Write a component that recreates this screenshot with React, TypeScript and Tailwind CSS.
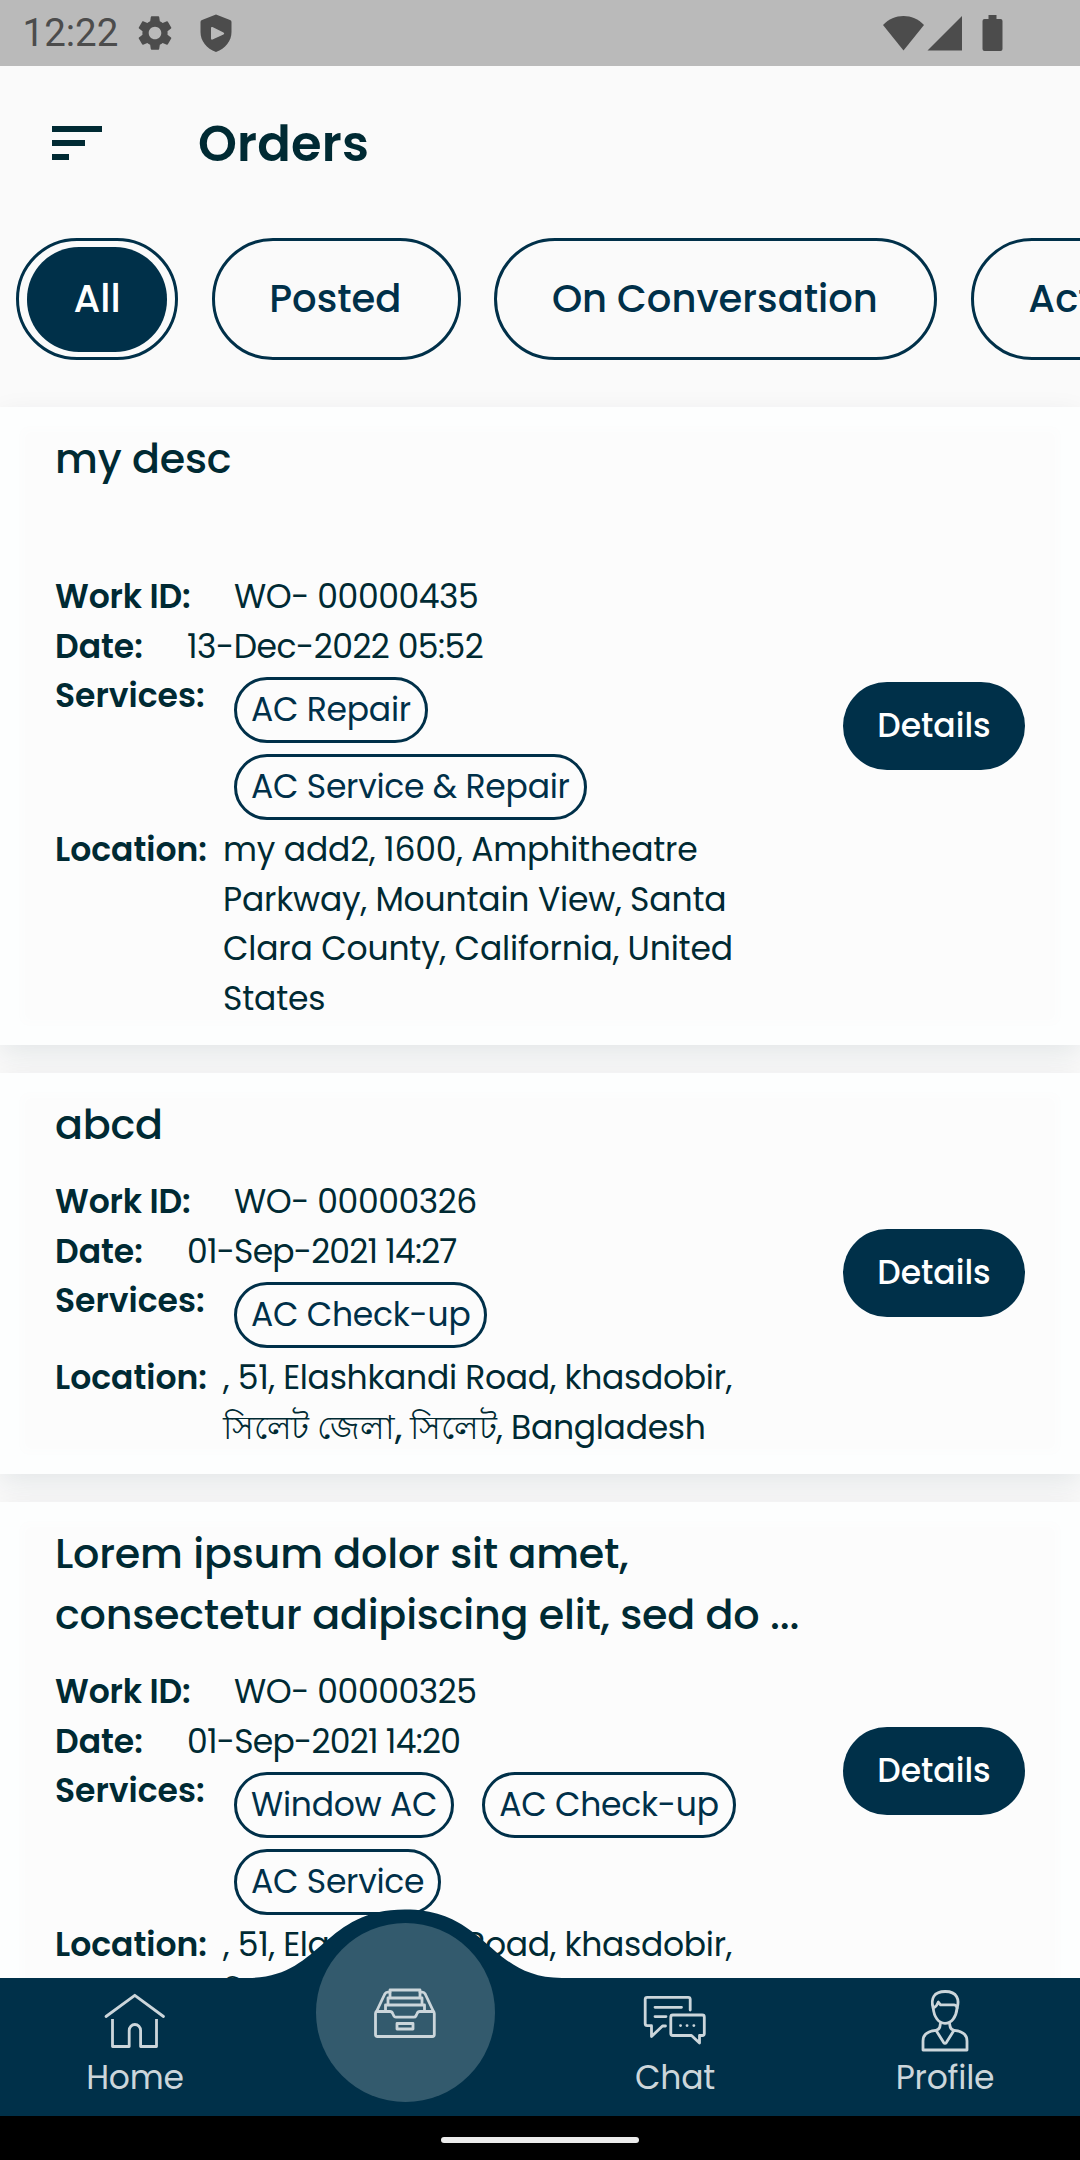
import type { ReactNode } from "react";
import { MdSettings } from "react-icons/md";

type Order = {
  title: string[];
  workId: string;
  date: string;
  dateSpacing: string;
  services: string[];
  location: ReactNode[];
  locationSpacing: string;
};

const tabs = ["All", "Posted", "On Conversation", "Active"];

const sylhet: ReactNode[] = [
  ", 51, Elashkandi Road, khasdobir,",
  <>
    <span className="font-medium">সিলেট জেলা, সিলেট</span>, Bangladesh
  </>,
];

const orders: Order[] = [
  {
    title: ["my desc", "\u00a0"],
    workId: "WO- 00000435",
    date: "13-Dec-2022 05:52",
    dateSpacing: "tracking-[-0.5px]",
    services: ["AC Repair", "AC Service & Repair"],
    location: ["my add2, 1600, Amphitheatre", "Parkway, Mountain View, Santa", "Clara County, California, United", "States"],
    locationSpacing: "tracking-[-0.18px]",
  },
  {
    title: ["abcd"],
    workId: "WO- 00000326",
    date: "01-Sep-2021 14:27",
    dateSpacing: "tracking-[-0.8px]",
    services: ["AC Check-up"],
    location: sylhet,
    locationSpacing: "tracking-[-0.3px]",
  },
  {
    title: ["Lorem ipsum dolor sit amet,", "consectetur adipiscing elit, sed do ..."],
    workId: "WO- 00000325",
    date: "01-Sep-2021 14:20",
    dateSpacing: "tracking-[-0.75px]",
    services: ["Window AC", "AC Check-up", "AC Service"],
    location: sylhet,
    locationSpacing: "tracking-[-0.3px]",
  },
];

function StatusBar() {
  return (
    <div className="flex h-[66px] shrink-0 items-center bg-[#bababa] pl-[22.5px] pr-[77px] text-[#4c4c4c]">
      <span className="font-[Roboto] text-[38.5px] leading-none">12:22</span>
      <MdSettings className="ml-[15.5px] size-[42px]" />
      <svg className="ml-[22px] h-[40px] w-[36px]" viewBox="0 0 36 40" fill="currentColor">
        <path
          fillRule="evenodd"
          d="M18 1.5 32 7a2 2 0 0 1 1.5 2V19c0 9-6 16.500-15.500 20C8.500 35.500 2.500 28 2.500 19V9A2 2 0 0 1 4 7ZM13 15v10.500q0 1.500 1.500 1l11-5q1.500-1 0-2l-11-5.500q-1.500-.5-1.500 1Z"
        />
      </svg>
      <svg className="ml-auto h-[36px] w-[121px]" viewBox="0 0 121 36" fill="currentColor">
        <path d="M1 10C12-2 31-2 42 10L21.500 35.500Z" />
        <path d="M80 1v34.500H45.500Z" />
        <path d="M106.500 0h8v4h4q2 0 2 2v28q0 2-2 2h-16q-2 0-2-2V6q0-2 2-2h4Z" />
      </svg>
    </div>
  );
}

function Header() {
  return (
    <header className="flex h-[172px] shrink-0 items-start pl-[52px] pt-[41px]">
      <button className="mt-[19px] flex flex-col gap-[8px]" aria-label="Menu">
        <span className="h-[6px] w-[50px] bg-[#002a33]" />
        <span className="h-[6px] w-[33px] bg-[#002a33]" />
        <span className="h-[6px] w-[17px] bg-[#002a33]" />
      </button>
      <h1 className="ml-[96px] text-[49.5px] font-semibold leading-[74px] tracking-[0.2px]">Orders</h1>
    </header>
  );
}

function Tabs() {
  return (
    <div className="flex h-[169px] shrink-0 items-start gap-[33.5px] overflow-hidden pl-[16px] text-[38.5px] font-medium leading-[58px]">
      {tabs.map((tab, i) =>
        i === 0 ? (
          <button key={tab} className="h-[122px] shrink-0 rounded-[61px] border-[3px] border-[#003049] px-[8px] py-[5.5px]">
            <span className="flex h-full items-center rounded-[52px] bg-[#003049] px-[46.5px] text-white">{tab}</span>
          </button>
        ) : (
          <button
            key={tab}
            className="h-[122px] shrink-0 rounded-[61px] border-[3px] border-[#003049] pl-[54.5px] pr-[56.5px] text-[#003049]"
          >
            {tab}
          </button>
        ),
      )}
    </div>
  );
}

function OrderCard({ order }: { order: Order }) {
  return (
    <article className="flex shrink-0 items-center bg-[#fcfcfc] pb-[22px] pl-[55px] pr-[55px] pt-[21px] shadow-[inset_0_0_10px_22px_#fdfefe,0_10px_28px_rgba(0,43,54,0.09)]">
      <div className="flex-1">
        <h2 className="text-[41.25px] font-medium leading-[61px] tracking-[-0.2px]">
          {order.title.map((line) => (
            <span key={line} className="block whitespace-nowrap">
              {line}
            </span>
          ))}
        </h2>
        <div className="mt-[22px] text-[33px] leading-[49.5px]">
          <div className="flex">
            <span className="w-[179px] font-semibold tracking-[-0.15px]">Work ID:</span>
            <span className="tracking-[-0.45px]">{order.workId}</span>
          </div>
          <div className="flex">
            <span className="w-[132px] font-semibold">Date:</span>
            <span className={order.dateSpacing}>{order.date}</span>
          </div>
          <div className="flex">
            <span className="w-[179px] shrink-0 font-semibold">Services:</span>
            <div className="flex w-[540px] flex-wrap gap-x-[28px] gap-y-[11px] py-[5.5px] tracking-[-0.25px]">
              {order.services.map((service) => (
                <span
                  key={service}
                  className="flex h-[66px] items-center rounded-full border-[3px] border-[#003049] px-[14px] text-[#003049]"
                >
                  {service}
                </span>
              ))}
            </div>
          </div>
          <div className="flex">
            <span className="w-[168px] shrink-0 font-semibold">Location:</span>
            <div className={order.locationSpacing}>
              {order.location.map((line, i) => (
                <div key={i} className="h-[49.5px] whitespace-nowrap">
                  {line}
                </div>
              ))}
            </div>
          </div>
        </div>
      </div>
      <button className="h-[88px] w-[182px] shrink-0 rounded-full bg-[#003049] text-[33px] font-medium leading-[49.5px] text-white">
        Details
      </button>
    </article>
  );
}

function NavIcon({ children }: { children: ReactNode }) {
  return (
    <svg
      className="size-[80px]"
      viewBox="0.5 0 80 80"
      fill="none"
      stroke="currentColor"
      strokeWidth="2.8"
      strokeLinecap="round"
      strokeLinejoin="round"
    >
      {children}
    </svg>
  );
}

function NavItem({ label, children }: { label: string; children: ReactNode }) {
  return (
    <button className="flex h-full w-[270px] flex-col items-center pt-[1.5px]">
      {children}
      <span className="-mt-[7px] text-[33px] leading-[49.5px] tracking-[-0.2px]">{label}</span>
    </button>
  );
}

function BottomNav() {
  return (
    <nav className="absolute bottom-0 left-0 w-full text-[#ccd6db]">
      <svg className="block h-[69px] w-full" viewBox="0 0 1080 69" fill="#003049">
        <path d="M248 69C322 69 322 0.500 405 0.500S488 69 562 69Z" />
      </svg>
      <div className="flex h-[138px] bg-[#003049]">
        <NavItem label="Home">
          <NavIcon>
            <path d="M11.500 36.500 40.300 15.300 69 36.500" />
            <path d="M18 39V66.500H34.700V50.500a5.700 6 0 0 1 11.400 0V66.500H62V39" strokeLinecap="butt" />
          </NavIcon>
        </NavItem>
        <div className="flex w-[270px] justify-center">
          <div className="-mt-[55px] flex size-[179px] shrink-0 items-center justify-center rounded-full bg-[#335a6d]">
            <NavIcon>
              <path d="M12 38.500h13.500q2 0 2.700 2l1.200 2.500q.6 1.200 2 1.200h18q1.400 0 2-1.200l1.200-2.500q.7-2 2.700-2h13.500q1 .5 1 2V61.500q0 2-2 2H13q-2 0-2-2V40.500q0-1.500 1-2Z" />
              <path d="M12 38.500 20.300 21q1-1.800 3-1.800h2.200M69 38.500 60.700 21q-1-1.800-3-1.800h-2.200" />
              <path d="M25.500 24.500V17H55.500v7.500M23.500 31.500V25H57.500v6.500M21 38V32H60v6M32.500 50.500H48.500v5.500H32.500Z" />
            </NavIcon>
          </div>
        </div>
        <NavItem label="Chat">
          <NavIcon>
            <path d="M55.700 30V19.300q0-2-2-2H12.700q-2 0-2 2V43.500q0 2.200 2 2.200H17V56.500L28 46H31M20.500 27.300H47M20.500 36.600H31.500" />
            <path d="M38.300 35h29.500q2 0 2 2v16.500q0 2-2 2H65v7.500l-8-7.500H38.300q-2 0-2-2V37q0-2 2-2Z" />
            <path d="M46 45.600h.1M52.500 45.600h.1M59.300 45.600h.1" />
          </NavIcon>
        </NavItem>
        <NavItem label="Profile">
          <NavIcon>
            <path d="M28.700 28C26 19 29 11.500 40.800 11.500 53 11.500 55 20 52.600 28" />
            <path d="M28.700 28C29.500 37 34 43.300 40.500 43.300S51.700 37 52.600 28q-.3-3-3-3.200H36L33.800 22q-1 4-5.100 6Z" />
            <path d="M36 43.300 35.300 47q-.8 2.500-3.800 3.300M45 43.300 45.700 47q.8 2.500 3.800 3.300" />
            <path d="M31.500 50.300Q18.500 51.500 18.500 61V70H62.500V61Q62.500 51.500 49.500 50.300L42 62.300q-1.500 2-3 0Z" />
          </NavIcon>
        </NavItem>
      </div>
      <div className="flex h-[44px] justify-center bg-black pt-[21px]">
        <div className="h-[6px] w-[198px] rounded-full bg-[#ececec]" />
      </div>
    </nav>
  );
}

export default function App() {
  return (
    <div className="relative flex h-[2160px] w-[1080px] flex-col overflow-hidden bg-[#fafafa] font-[Poppins,sans-serif] text-[#002a33]">
      <StatusBar />
      <Header />
      <Tabs />
      <main className="flex flex-col gap-[28px]">
        {orders.map((order) => (
          <OrderCard key={order.workId} order={order} />
        ))}
      </main>
      <BottomNav />
    </div>
  );
}
